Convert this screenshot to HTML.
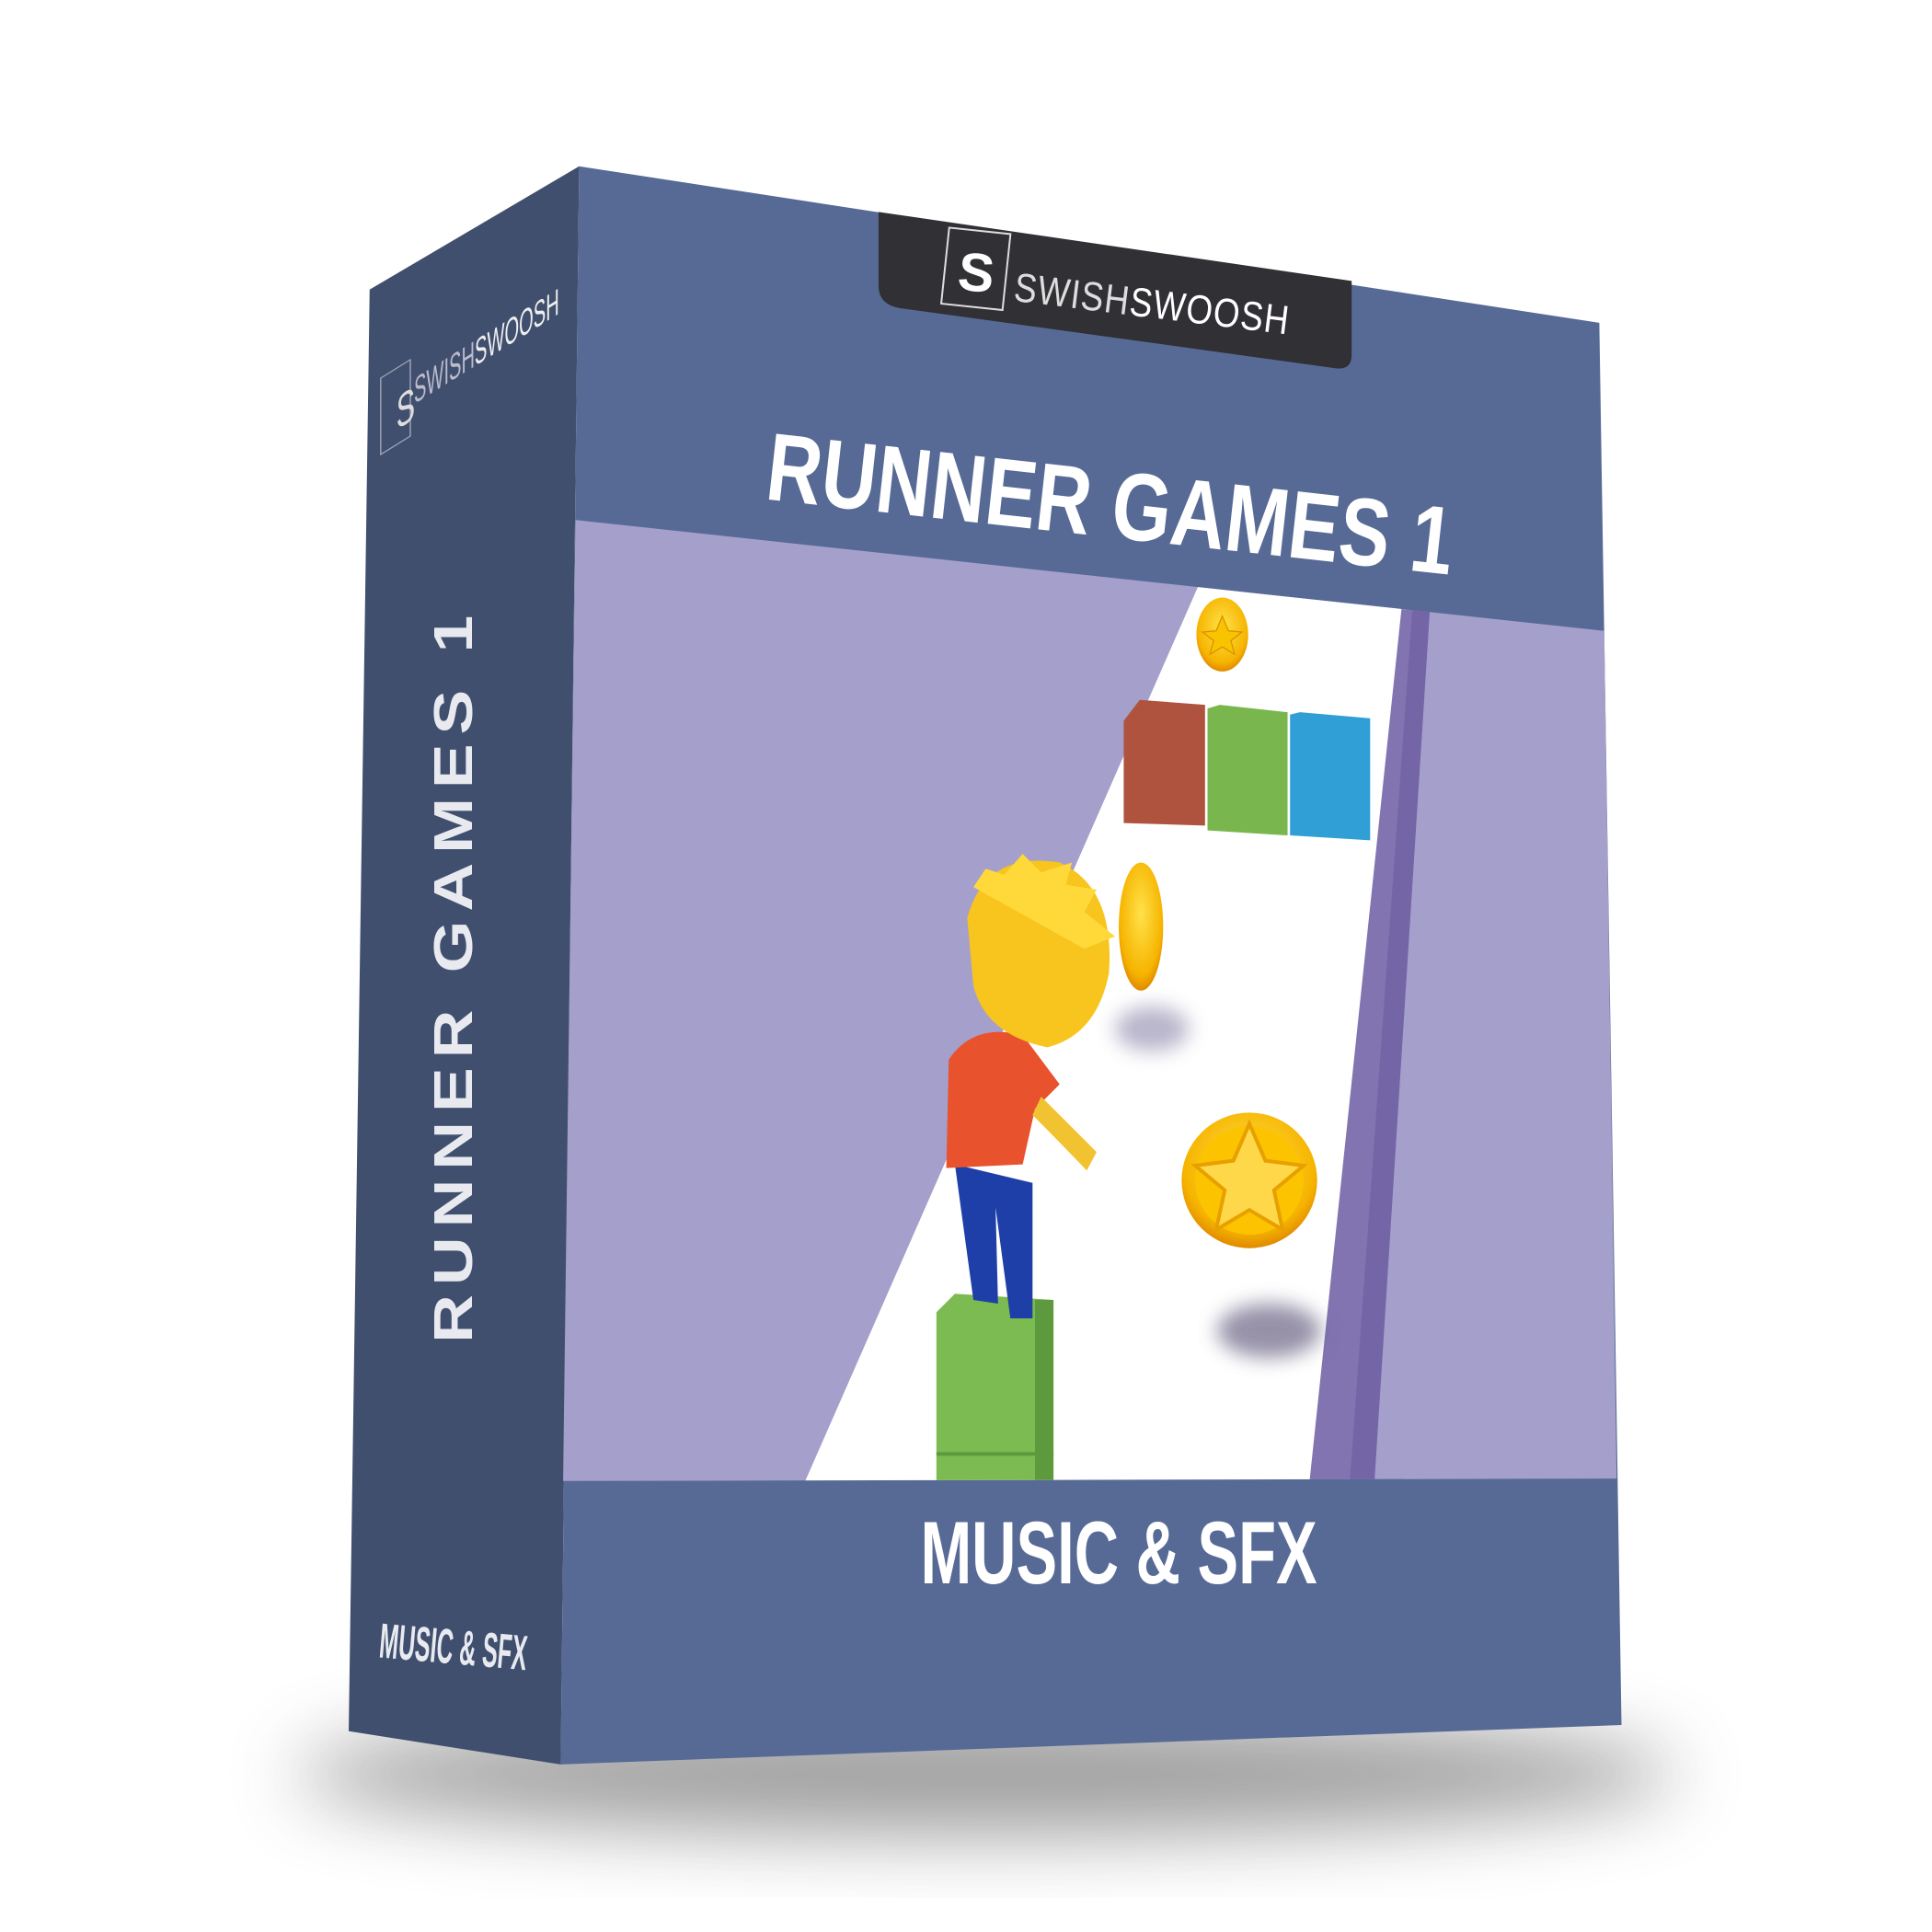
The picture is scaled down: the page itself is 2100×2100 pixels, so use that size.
<!DOCTYPE html>
<html><head><meta charset="utf-8"><style>
html,body{margin:0;padding:0;background:#fff;width:2100px;height:2100px;overflow:hidden}
svg{display:block}
text{font-family:"Liberation Sans",sans-serif}
</style></head><body>
<svg width="2100" height="2100" viewBox="0 0 1568 1568" xmlns="http://www.w3.org/2000/svg">
<defs>
<filter id="blur" x="-50%" y="-50%" width="200%" height="200%"><feGaussianBlur stdDeviation="30"/></filter>
<filter id="b2" x="-50%" y="-50%" width="200%" height="200%"><feGaussianBlur stdDeviation="8"/></filter>
<radialGradient id="coin" cx="50%" cy="40%" r="60%"><stop offset="0" stop-color="#ffe24a"/><stop offset="0.8" stop-color="#f6b400"/><stop offset="1" stop-color="#e08a00"/></radialGradient>
<clipPath id="pic"><polygon points="467,422 1302,512 1312,1200 457,1202"/></clipPath>
</defs>
<ellipse cx="800" cy="1440" rx="560" ry="50" fill="#555" opacity="0.55" filter="url(#blur)"/>
<polygon points="300,235 470,135 455,1432 283,1405" fill="#404F6E"/>
<polygon points="470,135 1298,262 1316,1400 455,1432" fill="#576A95"/>
<g clip-path="url(#pic)">
<rect x="440" y="400" width="900" height="820" fill="#A59FCB"/>
<polygon points="975,470 1145,470 1065,1210 650,1210" fill="#fff"/>
<polygon points="1140,470 1162,470 1115,1210 1062,1210" fill="#8174B1"/>
<polygon points="1148,470 1162,470 1115,1210 1095,1210" fill="#7465A6"/>
<polygon points="912,585 925,568 978,572 978,670 912,668" fill="#B0533E"/>
<polygon points="980,575 990,572 1045,578 1045,678 980,674" fill="#79B74E"/>
<polygon points="1047,580 1055,578 1112,583 1112,682 1047,678" fill="#2F9FD6"/>
<ellipse cx="992" cy="515" rx="21" ry="30" fill="url(#coin)"/>
<polygon points="992,500 997,512 1008,513 999,520 1002,531 992,525 982,531 985,520 976,513 987,512" fill="#f8c400" stroke="#d99400"/>
<ellipse cx="926" cy="752" rx="18" ry="52" fill="url(#coin)"/>
<ellipse cx="935" cy="835" rx="30" ry="18" fill="#8a84a8" opacity="0.6" filter="url(#b2)"/>
<circle cx="1014" cy="958" r="55" fill="url(#coin)"/>
<circle cx="1014" cy="958" r="44" fill="#fcc400"/>
<polygon points="1014,912 1027,942 1058,946 1034,966 1041,998 1014,982 987,998 994,966 970,946 1001,942" fill="#ffd84a" stroke="#e8a000" stroke-width="3"/>
<ellipse cx="1030" cy="1080" rx="42" ry="22" fill="#6a6483" opacity="0.7" filter="url(#b2)"/>
<polygon points="760,1065 775,1050 855,1055 855,1210 760,1210" fill="#7CBA52"/>
<polygon points="840,1055 855,1055 855,1210 840,1210" fill="#5d9a3d"/>
<line x1="760" y1="1180" x2="855" y2="1180" stroke="#5d9a3d" stroke-width="3"/>
<path d="M775,945 L790,1055 L810,1058 L808,980 L820,1070 L838,1070 L838,960 Z" fill="#1F3FA8"/>
<path d="M770,860 Q790,830 830,840 L860,880 L840,900 L830,945 L768,948 Z" fill="#E8522C"/>
<path d="M845,890 Q870,915 890,935 L882,950 Q858,925 838,905 Z" fill="#F2C331"/>
<path d="M785,745 Q800,690 860,700 Q905,720 900,790 Q890,840 850,850 Q800,840 790,800 Z" fill="#F7C51E"/>
<path d="M790,720 L800,705 L815,710 L830,693 L845,708 L870,700 L865,718 L890,722 L880,740 L905,760 L880,770 Z" fill="#FFD93A"/>
</g>
<path d="M713,172 L1097,228 L1097,288 Q1097,300 1085,299 L730,250 Q713,247 713,232 Z" fill="#303035"/>
<rect x="767" y="187" width="50" height="62" fill="none" stroke="#ddd" stroke-width="1.5" transform="rotate(6 790 218)"/>
<text x="778" y="236" font-size="44" fill="#fff" font-weight="bold" transform="rotate(6 790 218)">S</text>
<text x="822" y="244" font-size="33" fill="#ddd" transform="rotate(7 822 244)" letter-spacing="1" textLength="225" lengthAdjust="spacingAndGlyphs">SWISH<tspan fill="#fff">SWOOSH</tspan></text>
<text x="620" y="405" font-size="78" font-weight="bold" fill="#fff" transform="rotate(6.3 620 405)" textLength="560" lengthAdjust="spacingAndGlyphs">RUNNER GAMES 1</text>
<text x="908" y="1285" font-size="72" font-weight="bold" fill="#fff" text-anchor="middle" textLength="322" lengthAdjust="spacingAndGlyphs">MUSIC &amp; SFX</text>
<text x="383" y="1090" font-size="44" font-weight="bold" fill="#E8EAF0" transform="rotate(-90 383 1090)" textLength="598" lengthAdjust="spacingAndGlyphs" letter-spacing="6">RUNNER GAMES 1</text>
<text x="307" y="1345" font-size="40" font-weight="bold" fill="#E8EAF0" transform="rotate(5 307 1345)" textLength="120" lengthAdjust="spacingAndGlyphs">MUSIC &amp; SFX</text>
<g transform="translate(336,328) skewY(-32)">
<rect x="-27" y="-38" width="24" height="62" fill="none" stroke="#aab" stroke-width="1"/>
<text x="-24" y="12" font-size="38" fill="#ddd" transform="scale(0.6,1)">S</text>
<text x="0" y="0" font-size="30" fill="#bbc" transform="scale(0.62,1)" textLength="190" lengthAdjust="spacingAndGlyphs">SWISH<tspan fill="#eee">SWOOSH</tspan></text>
</g>
</svg>
</body></html>
